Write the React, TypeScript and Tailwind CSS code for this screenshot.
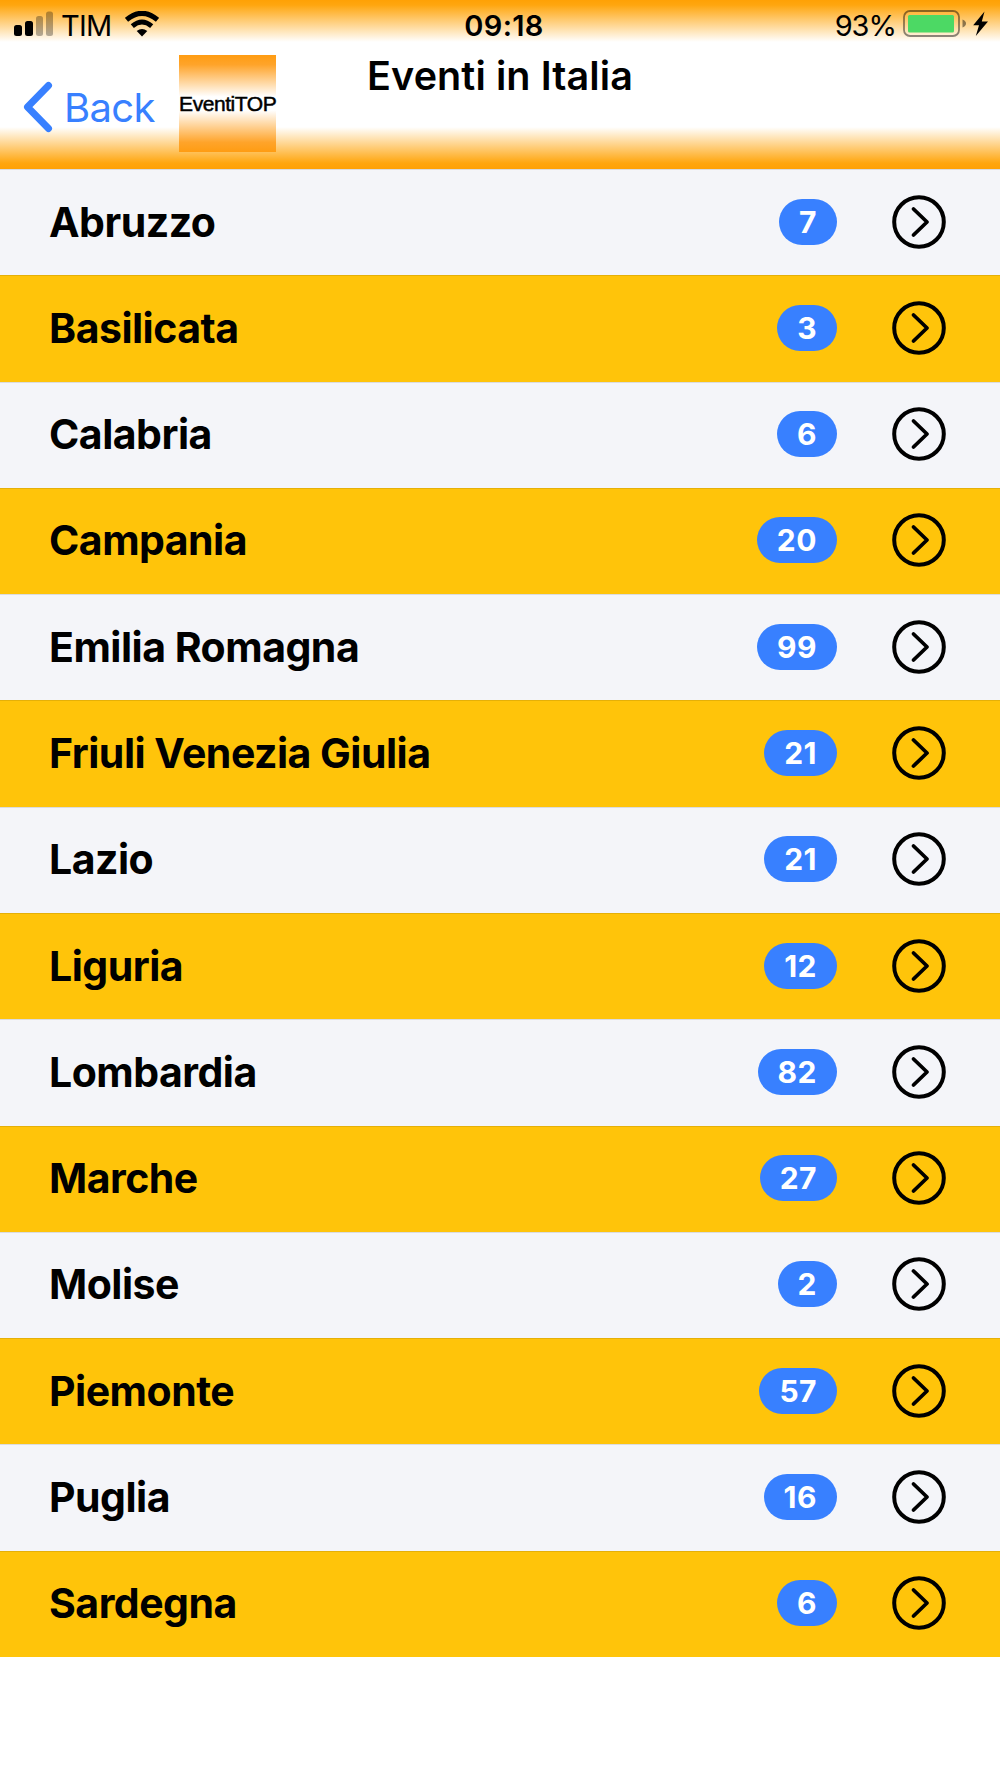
interface Regione {
  nome: string;
  eventi: number;
}

const regioni: Regione[] = [
  { nome: 'Abruzzo', eventi: 7 },
  { nome: 'Basilicata', eventi: 3 },
  { nome: 'Calabria', eventi: 6 },
  { nome: 'Campania', eventi: 20 },
  { nome: 'Emilia Romagna', eventi: 99 },
  { nome: 'Friuli Venezia Giulia', eventi: 21 },
  { nome: 'Lazio', eventi: 21 },
  { nome: 'Liguria', eventi: 12 },
  { nome: 'Lombardia', eventi: 82 },
  { nome: 'Marche', eventi: 27 },
  { nome: 'Molise', eventi: 2 },
  { nome: 'Piemonte', eventi: 57 },
  { nome: 'Puglia', eventi: 16 },
  { nome: 'Sardegna', eventi: 6 }
];

function StatusBar() {
  return (
    <div className="grid h-[50px] grid-cols-[1fr_auto_1fr] items-center text-[29px] leading-none text-black">
      {/* Segnale, operatore e wifi */}
      <div className="flex items-center pl-3.5">
        <svg width="40" height="26" viewBox="0 0 40 26" className="-mt-0.5">
          <rect x="0" y="14" width="8" height="11" rx="2.5" />
          <rect x="11" y="10" width="8" height="15" rx="2.5" />
          <rect x="22" y="5" width="7" height="20" rx="2.5" fillOpacity="0.3" />
          <rect x="32" y="0.5" width="7" height="24.5" rx="2.5" fillOpacity="0.3" />
        </svg>
        <span className="ml-[7px] tracking-[-0.8px]">TIM</span>
        <svg width="34" height="26" viewBox="0 0 34 26" className="ml-[14px] -mt-0.5">
          <path d="M1.5 8.8 Q17 -4.2 32.5 8.8" fill="none" stroke="#000" strokeWidth="5" />
          <path d="M7.3 15.2 Q17 7 26.7 15.2" fill="none" stroke="#000" strokeWidth="4.8" />
          <path d="M17 25.5 L11.7 20 Q17 15.8 22.3 20 Z" />
        </svg>
      </div>
      <span className="pl-[8px] font-semibold tracking-[0.3px]">09:18</span>
      {/* Batteria */}
      <div className="flex items-center justify-end pr-[11px]">
        <span className="tracking-[-1px]">93%</span>
        <svg width="86" height="28" viewBox="0 0 86 28" className="ml-[7px] -mt-0.5">
          <rect x="1" y="1" width="55" height="25" rx="6" fill="none" stroke="#000" strokeOpacity="0.45" strokeWidth="1.8" />
          <rect x="5" y="5" width="46" height="17.5" rx="1.5" fill="#4cd964" />
          <path d="M59.5 9.5 Q63 11 63 13.5 Q63 16 59.5 17.5 Z" fillOpacity="0.45" />
          <path d="M81.5 1.5 L70.2 15.3 H76 L72.8 26 L85 11.5 H78.8 Z" />
        </svg>
      </div>
    </div>
  );
}

function Header() {
  return (
    <header className="h-[169px] shrink-0 bg-[linear-gradient(to_bottom,#ffa105_0px,#ffa60f_5px,#ffffff_42px,#ffffff_127px,#ffa60f_163px,#ffa105_169px)]">
      <StatusBar />
      <div className="grid grid-cols-[1fr_auto_1fr] items-start">
        <div className="flex items-center pl-[23px] pt-[5px]">
          <button className="flex items-center text-[#3880ff]">
            <svg width="31" height="52" viewBox="0 0 31 52" className="mt-[7px]">
              <path d="M25.5 4.5 L4.5 26 L25.5 47.5" fill="none" stroke="currentColor" strokeWidth="7" strokeLinecap="round" strokeLinejoin="round" />
            </svg>
            <span className="ml-[10px] mt-[8px] text-[40px] leading-none tracking-[-0.7px]">Back</span>
          </button>
          <div className="ml-[24.5px] flex h-[97px] w-[97px] items-center justify-center bg-[linear-gradient(to_bottom,#ff9c12,#ffa42a_10%,#ffffff_43%,#ffffff_57%,#ffa42a_90%,#ff9c12)]">
            <span className="font-['Liberation_Sans',sans-serif] text-[21px] leading-none tracking-[-0.45px] text-black [-webkit-text-stroke:0.5px_#000]">
              EventiTOP
            </span>
          </div>
        </div>
        <h1 className="pt-[2px] text-[39.5px] font-semibold leading-[48px] tracking-[0.1px] text-black">Eventi in Italia</h1>
      </div>
    </header>
  );
}

function RigaRegione({ nome, eventi }: Regione) {
  return (
    <li className="flex h-[106.29px] items-center border-t border-black/10 pl-[49px] pr-[54px] odd:bg-[#f4f5f9] even:bg-[#ffc40a]">
      <span className="flex-1 pb-px text-[41px] font-bold leading-none tracking-[-0.5px] text-black">{nome}</span>
      <span className="-mt-0.5 flex h-[46px] items-center rounded-full bg-[#3880ff] px-[20px] text-[30px] font-bold leading-none tracking-[0.5px] text-white">
        {eventi}
      </span>
      <svg width="54" height="54" viewBox="0 0 54 54" className="-mt-0.5 ml-[55px]" fill="none" stroke="#000" strokeWidth="4" strokeLinecap="round" strokeLinejoin="round">
        <circle cx="27" cy="27" r="24.8" />
        <path d="M21.5 14 L35 27 L21.5 40" strokeWidth="3.8" />
      </svg>
    </li>
  );
}

export default function App() {
  return (
    <div className="flex h-[1778px] w-[1000px] flex-col overflow-hidden bg-white font-['Inter',sans-serif]">
      <Header />
      <ul>
        {regioni.map(r => (
          <RigaRegione key={r.nome} nome={r.nome} eventi={r.eventi} />
        ))}
      </ul>
    </div>
  );
}
